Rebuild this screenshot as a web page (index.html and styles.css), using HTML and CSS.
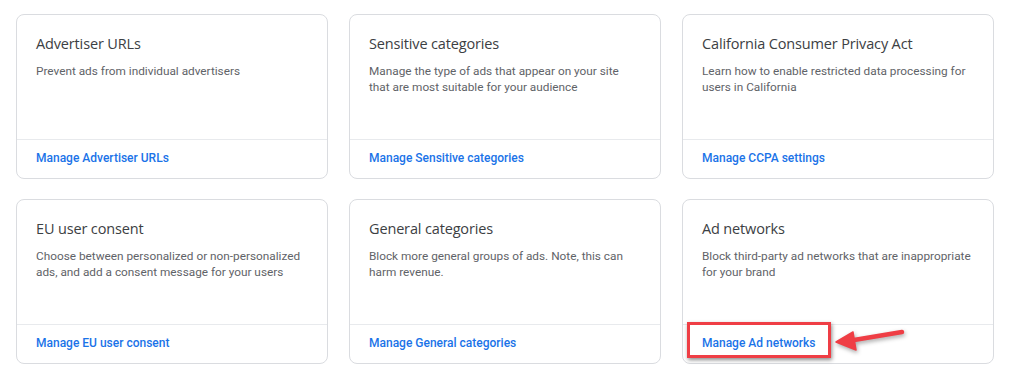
FILE: index.html
```
<!DOCTYPE html>
<html lang="en">
<head>
  <meta charset="UTF-8">
  <meta name="viewport" content="width=device-width, initial-scale=1.0">
  <title>Blocking controls</title>
  <link rel="stylesheet" href="styles.css">
</head>
<body>
  <main class="cards">
    <div class="card">
      <div class="card-body">
        <h2>Advertiser URLs</h2>
        <p>Prevent ads from individual advertisers</p>
      </div>
      <div class="card-footer"><a href="#">Manage Advertiser URLs</a></div>
    </div>
    <div class="card">
      <div class="card-body">
        <h2>Sensitive categories</h2>
        <p>Manage the type of ads that appear on your site that are most suitable for your audience</p>
      </div>
      <div class="card-footer"><a href="#">Manage Sensitive categories</a></div>
    </div>
    <div class="card">
      <div class="card-body">
        <h2>California Consumer Privacy Act</h2>
        <p>Learn how to enable restricted data processing for users in California</p>
      </div>
      <div class="card-footer"><a href="#">Manage CCPA settings</a></div>
    </div>
    <div class="card">
      <div class="card-body">
        <h2>EU user consent</h2>
        <p>Choose between personalized or non-personalized ads, and add a consent message for your users</p>
      </div>
      <div class="card-footer"><a href="#">Manage EU user consent</a></div>
    </div>
    <div class="card">
      <div class="card-body">
        <h2>General categories</h2>
        <p>Block more general groups of ads. Note, this can harm revenue.</p>
      </div>
      <div class="card-footer"><a href="#">Manage General categories</a></div>
    </div>
    <div class="card highlighted">
      <div class="card-body">
        <h2>Ad networks</h2>
        <p>Block third-party ad networks that are inappropriate for your brand</p>
      </div>
      <div class="card-footer"><a href="#">Manage Ad networks</a></div>
      <!-- screenshot annotation -->
      <div class="mark-box"></div>
      <svg class="mark-arrow" width="80" height="30" viewBox="0 0 80 30">
        <path d="M68 6 L20 14" stroke="#ef3e45" stroke-width="4.5" stroke-linecap="round" fill="none"/>
        <path d="M2 16 L19 6 L22 24 Z" fill="#ef3e45" stroke="#ef3e45" stroke-width="1.5" stroke-linejoin="round"/>
      </svg>
    </div>
  </main>
</body>
</html>
```

FILE: styles.css
```
body {
  margin: 0;
  background-color: #fff;
  font-family: Roboto, "Liberation Sans", sans-serif;
}
.cards {
  display: grid;
  grid-template-columns: repeat(3, 312px);
  grid-auto-rows: 165px;
  gap: 20px 21px;
  padding: 14px 16px;
}
.card {
  position: relative;
  display: flex;
  flex-direction: column;
  border: 1px solid #dadce0;
  border-radius: 8px;
  background-color: #fff;
}
.card-body {
  flex: 1;
  padding: 18px 19px 0 19px;
}
.card-body h2 {
  margin: 0;
  font-family: "Open Sans", sans-serif;
  font-size: 14.5px;
  font-weight: 400;
  line-height: 22px;
  color: #3c4043;
  letter-spacing: -0.15px;
}
.card-body p {
  margin: 8px 0 0 0;
  font-size: 11.8px;
  line-height: 16px;
  color: #5f6368;
}
.card-footer {
  display: flex;
  align-items: center;
  height: 39px;
  padding: 0 19px 2px 19px;
  box-sizing: border-box;
  border-top: 1px solid #e8eaed;
}
.card-footer a {
  font-size: 12px;
  font-weight: 500;
  color: #1a73e8;
  text-decoration: none;
}
.mark-box {
  position: absolute;
  left: 4px;
  top: 122px;
  width: 138px;
  height: 30px;
  border: 3px solid #ef3e45;
  box-shadow: 1px 2px 4px rgba(0, 0, 0, 0.45);
}
.mark-arrow {
  position: absolute;
  left: 151px;
  top: 126px;
  filter: drop-shadow(1px 2px 2px rgba(0, 0, 0, 0.35));
}
```
